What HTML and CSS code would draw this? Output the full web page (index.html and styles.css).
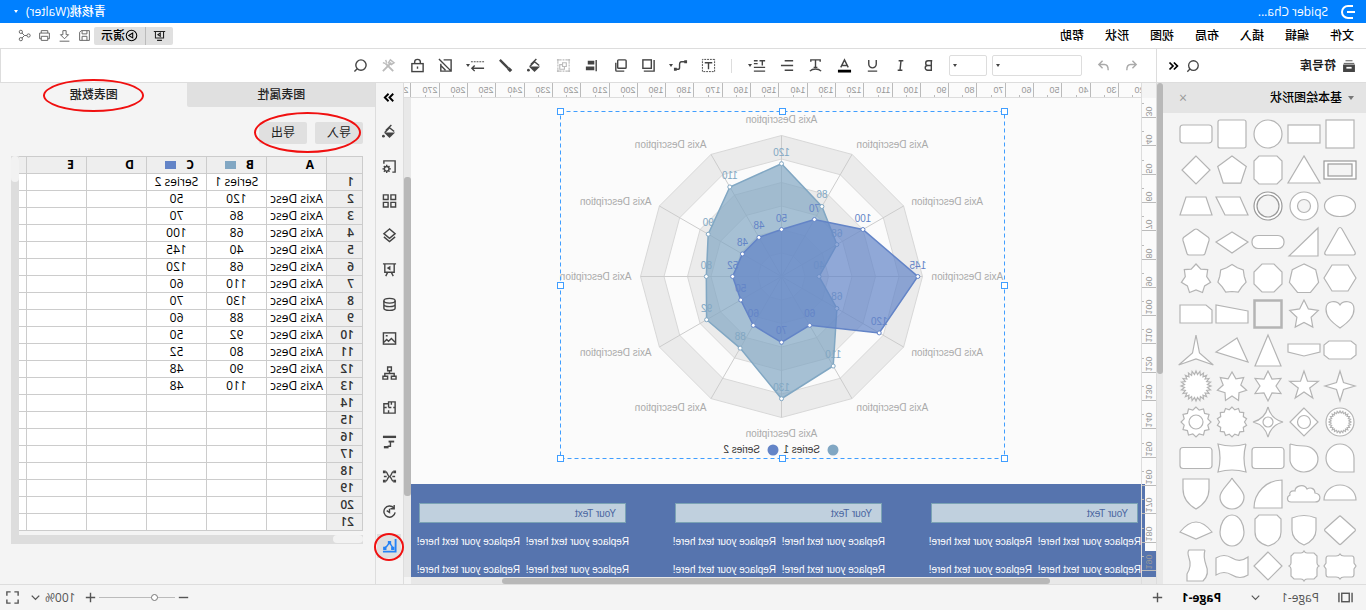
FILE: index.html
```html
<!DOCTYPE html>
<html lang="zh-CN">
<head>
<meta charset="utf-8">
<title>Spider Chart</title>
<link rel="stylesheet" href="styles.css">
</head>
<body>
<svg class="defs" aria-hidden="true">
  <symbol id="i-search" viewBox="0 0 16 16"><circle cx="7.5" cy="7.5" r="5.5"/><path d="M11.500 11.500l3 3"/></symbol>
  <symbol id="i-undo" viewBox="0 0 16 16"><path d="M7 3L3 7l4 4M3 7h6c3 0 4 2 4 6"/></symbol>
  <symbol id="i-redo" viewBox="0 0 16 16"><path d="M9 3l4 4-4 4M13 7H7c-3 0-4 2-4 6"/></symbol>
  <symbol id="i-bold" viewBox="0 0 16 16"><path d="M5 3v10h4a2.5 2.500 0 0 0 0-5H5h3.500a2.500 2.500 0 0 0 0-5H4"/></symbol>
  <symbol id="i-italic" viewBox="0 0 16 16"><path d="M5 3h5M6 13h5M7.500 3l1 10"/></symbol>
  <symbol id="i-under" viewBox="0 0 16 16"><path d="M4 2v4.500a4 4 0 0 0 8 0V2M3 14h10"/></symbol>
  <symbol id="i-color" viewBox="0 0 16 16"><path d="M4 10l4-8 4 8M5.500 8h5"/><path d="M1 14h14" stroke="#000" stroke-width="3"/></symbol>
  <symbol id="i-arc" viewBox="0 0 16 16"><path d="M3 4V2h10v2M8 2v8M6 10h4M2 14c3-3 9-3 12 0"/></symbol>
  <symbol id="i-align" viewBox="0 0 16 16"><path d="M2 3h9M2 8h13M2 13h9"/></symbol>
  <symbol id="i-space" viewBox="0 0 16 16"><path d="M2 3h6M5 3v5M10 3h4M10 6h4M2 10h12M2 14h12"/></symbol>
  <symbol id="i-text" viewBox="0 0 16 16"><rect x="1.500" y="1.500" width="13" height="13" stroke-dasharray="2 1" stroke-width="1"/><path d="M4 5h8M8 5v7"/></symbol>
  <symbol id="i-conn" viewBox="0 0 16 16"><path d="M3 4h4q2 0 2 3v3q0 2 2 2h3"/><path d="M1 4h3M12 12h3" stroke-width="3"/></symbol>
  <symbol id="i-front" viewBox="0 0 16 16"><rect x="5" y="2" width="9" height="9"/><path d="M2 2v12h11"/></symbol>
  <symbol id="i-back" viewBox="0 0 16 16"><rect x="2" y="2" width="9" height="9" rx="1"/><path d="M13 5v8q0 1-1 1H4"/></symbol>
  <symbol id="i-left" viewBox="0 0 16 16"><path d="M3 2v12"/><path d="M5 5h7M5 11h9" stroke-width="4"/></symbol>
  <symbol id="i-group" viewBox="0 0 16 16"><path d="M2 4v8M14 4v8M4 2h8M4 14h8" stroke-dasharray="2 1"/><path d="M1 2h3M2 1v3M12 2h3M14 1v3M1 14h3M2 12v3M12 14h3M14 12v3M5 5h4v4H5zM7 9v3h5V7H9"/></symbol>
  <symbol id="i-fill" viewBox="0 0 16 16"><path d="M6 1l6 6M3 8l5-4 5 5" /><path d="M2 9h12l-6 6z" fill="currentColor" stroke="none"/><circle cx="14.500" cy="13" r="1.500" fill="currentColor" stroke="none"/></symbol>
  <symbol id="i-pen" viewBox="0 0 16 16"><path d="M14 2L5 11" stroke-width="2.500"/><path d="M2 14l3-3" stroke-width="3.500"/></symbol>
  <symbol id="i-arrow" viewBox="0 0 16 16"><path d="M1 4h14" stroke-dasharray="2 1" stroke-width="1"/><path d="M1 11h13M11 8l3 3-3 3"/></symbol>
  <symbol id="i-nofill" viewBox="0 0 16 16"><path d="M10 2H2v12h11V6M15 1L2 14M8 13l5-5"/></symbol>
  <symbol id="i-lock" viewBox="0 0 16 16"><rect x="2" y="6" width="12" height="8.500"/><path d="M5 6V4q0-2.500 3-2.500t3 2.500v2M8 9v2.500"/></symbol>
  <symbol id="i-tools" viewBox="0 0 16 16"><path d="M3 14l8-8M5 5l9 9" stroke-width="2"/><path d="M10 5l1-3M11 6l3-1M2 5l4-3 2 3-3 2z"/></symbol>
  <symbol id="i-collapse" viewBox="0 0 16 16"><path d="M7 4L3 8l4 4M12 4L8 8l4 4"/></symbol>
  <symbol id="i-expand" viewBox="0 0 16 16"><path d="M4 4l4 4-4 4M9 4l4 4-4 4"/></symbol>
  <symbol id="i-library" viewBox="0 0 16 16"><path d="M2 7h12v7H2z" fill="currentColor"/><path d="M2 5h12M4 2h8" stroke-width="1"/><path d="M5 10h6" stroke="#fff" stroke-width="2"/></symbol>
  <symbol id="i-gearbox" viewBox="0 0 16 16"><path d="M2 11V2h12v3M2 11v3h3"/><circle cx="11" cy="10.500" r="2.500"/><path d="M11 6v2M11 13v2M6.500 10.500h2M13.500 10.500h2M8 7.500l1 1M14 7.500l-1 1M8 13.500l1-1M14 13.500l-1-1"/></symbol>
  <symbol id="i-grid" viewBox="0 0 16 16"><path d="M1.500 2h5v5h-5zM9.500 2h5v5h-5zM1.500 10h5v5h-5zM9.500 10h5v5h-5z"/></symbol>
  <symbol id="i-layers" viewBox="0 0 16 16"><path d="M8 1l6 5-6 5-6-5zM2 9.500l6 5 6-5"/></symbol>
  <symbol id="i-board" viewBox="0 0 16 16"><path d="M1 2h14M3 2v9h10V2M6 11l-2 4M10 11l2 4"/><path d="M7 4l4 2.500L7 9z" fill="currentColor" stroke="none"/></symbol>
  <symbol id="i-data" viewBox="0 0 16 16"><ellipse cx="8" cy="4" rx="6" ry="2.500"/><path d="M2 4v8c0 3 12 3 12 0V4M2 8c0 3 12 3 12 0"/></symbol>
  <symbol id="i-image" viewBox="0 0 16 16"><rect x="1.500" y="2" width="13" height="12"/><path d="M2 12l4-4 3 3 2-2 3 3M10 5h2"/></symbol>
  <symbol id="i-org" viewBox="0 0 16 16"><path d="M6 1h4v4H6zM1 11h5v3H1zM10 11h5v3h-5zM8 5v3M3 11V8h10v3"/></symbol>
  <symbol id="i-plan" viewBox="0 0 16 16"><path d="M2 2h7v2h5v10H2zM9 4v4M6 8h3M2 8h2M9 14v-3M11 8h3M6 2v3"/></symbol>
  <symbol id="i-gantt" viewBox="0 0 16 16"><path d="M1 2h14" stroke-width="2.500"/><path d="M3 7h6" stroke-width="2"/><path d="M7 7v5h3"/><path d="M9 13h5" stroke-width="2.500"/></symbol>
  <symbol id="i-mind" viewBox="0 0 16 16"><path d="M1 3h3M12 3h3M1 13h3M12 13h3" stroke-width="3"/><path d="M4 3c2 0 2 5 4 5s2-5 4-5M4 13c2 0 2-5 4-5s2 5 4 5M2 8h3M11 8h3"/></symbol>
  <symbol id="i-history" viewBox="0 0 16 16"><path d="M3.500 4A6 6 0 1 1 2 9M3 1v4h4M8 5v4l3-2"/></symbol>
  <symbol id="i-chart" viewBox="0 0 16 16"><path d="M1.500 1v13.500H15" stroke-width="2"/><path d="M4 11l4-6 3 4 3 2"/><path d="M3.500 10h2v2h-2zM7 4h2v2H7zM12 10h2v2h-2z" fill="currentColor"/></symbol>
  <symbol id="i-slides" viewBox="0 0 16 16"><path d="M1 3h14M3 3v8h10V3M5 14h6M7 5l3 2-3 2z"/></symbol>
  <symbol id="i-play" viewBox="0 0 16 16"><circle cx="8" cy="8" r="6.500"/><path d="M6.500 5l5 3-5 3z"/></symbol>
  <symbol id="i-save" viewBox="0 0 16 16"><path d="M2 2h10l2 2v10H2zM5 2v4h6V2M5 14V9h6v5"/></symbol>
  <symbol id="i-down" viewBox="0 0 16 16"><path d="M6 2h4v5h3l-5 5-5-5h3zM2 15h12"/></symbol>
  <symbol id="i-print" viewBox="0 0 16 16"><path d="M4 5V2h8v3M4 12H2V5h12v7h-2M4 9h8v5H4z"/></symbol>
  <symbol id="i-share" viewBox="0 0 16 16"><circle cx="3" cy="8" r="2"/><circle cx="12.500" cy="3.500" r="2"/><circle cx="12.500" cy="12.500" r="2"/><path d="M5 8h3l3-3M8 8l3 3"/></symbol>
  <symbol id="i-pages" viewBox="0 0 16 16"><rect x="4" y="3.500" width="8" height="9" stroke-width="1.500"/><path d="M1 3v10M15 3v10"/></symbol>
  <symbol id="i-chev" viewBox="0 0 16 16"><path d="M4 6l4 4 4-4"/></symbol>
  <symbol id="i-plus" viewBox="0 0 16 16"><path d="M3 8h10M8 3v10"/></symbol>
  <symbol id="i-minus" viewBox="0 0 16 16"><path d="M3 8h10"/></symbol>
  <symbol id="i-full" viewBox="0 0 16 16"><path d="M2 6V2h4M10 2h4v4M14 10v4h-4M6 14H2v-4"/></symbol>
</svg>

<div class="app">
  <header class="titlebar">
    <svg class="logo" viewBox="0 0 16 16"><path d="M3 2h5a6 6 0 0 1 0 12H3M1 8h8"/></svg>
    <span class="doc">Spider Cha...</span>
    <button class="user">青核桃(Walter)<i class="caret"></i></button>
  </header>

  <nav class="menubar">
    <div class="menus">
      <button>文件</button><button>编辑</button><button>插入</button><button>布局</button><button>视图</button><button>形状</button><button>帮助</button>
    </div>
    <div class="present">
      <button class="present-main"><svg class="icon"><use href="#i-play"/></svg>演示</button><button class="present-alt" aria-label="Slides"><svg class="icon"><use href="#i-slides"/></svg></button>
    </div>
    <div class="file-tools">
      <button aria-label="Save"><svg class="icon thin"><use href="#i-save"/></svg></button>
      <button aria-label="Download"><svg class="icon thin"><use href="#i-down"/></svg></button>
      <button aria-label="Print"><svg class="icon thin"><use href="#i-print"/></svg></button>
      <button aria-label="Share"><svg class="icon thin"><use href="#i-share"/></svg></button>
    </div>
  </nav>

  <div class="toolrow">
    <div class="lib-head">
      <svg class="icon small"><use href="#i-library"/></svg>
      <h2>符号库</h2>
      <button aria-label="Search shapes"><svg class="icon"><use href="#i-search"/></svg></button>
      <button aria-label="Collapse"><svg class="icon strong"><use href="#i-collapse"/></svg></button>
    </div>
    <div class="toolbar">
      <div class="history">
        <button aria-label="Undo"><svg class="icon"><use href="#i-undo"/></svg></button>
        <button aria-label="Redo"><svg class="icon"><use href="#i-redo"/></svg></button>
      </div>
      <div class="pick"><select class="font" aria-label="Font"><option></option></select><i class="caret"></i></div>
      <div class="pick"><select class="size" aria-label="Font size"><option></option></select><i class="caret"></i></div>
      <div class="tools text-tools">
        <button aria-label="Bold"><svg class="icon"><use href="#i-bold"/></svg></button>
        <button aria-label="Italic"><svg class="icon"><use href="#i-italic"/></svg></button>
        <button aria-label="Underline"><svg class="icon"><use href="#i-under"/></svg></button>
        <button aria-label="Colour"><svg class="icon"><use href="#i-color"/></svg></button>
        <button aria-label="Text curve"><svg class="icon"><use href="#i-arc"/></svg></button>
        <button aria-label="Align"><svg class="icon"><use href="#i-align"/></svg></button>
        <button class="drop" aria-label="Spacing"><svg class="icon"><use href="#i-space"/></svg><i class="caret"></i></button>
      </div>
      <div class="rule"></div>
      <div class="tools shape-tools">
        <button aria-label="Text"><svg class="icon"><use href="#i-text"/></svg></button>
        <button class="drop" aria-label="Connector"><svg class="icon"><use href="#i-conn"/></svg><i class="caret"></i></button>
        <button aria-label="Front"><svg class="icon"><use href="#i-front"/></svg></button>
        <button aria-label="Back"><svg class="icon"><use href="#i-back"/></svg></button>
        <button aria-label="Align left"><svg class="icon"><use href="#i-left"/></svg></button>
        <button class="off" aria-label="Group"><svg class="icon thin"><use href="#i-group"/></svg></button>
        <button aria-label="Fill"><svg class="icon"><use href="#i-fill"/></svg></button>
        <button aria-label="Line"><svg class="icon"><use href="#i-pen"/></svg></button>
        <button class="drop" aria-label="Line style"><svg class="icon"><use href="#i-arrow"/></svg><i class="caret"></i></button>
        <button aria-label="Edit shape"><svg class="icon"><use href="#i-nofill"/></svg></button>
        <button aria-label="Lock"><svg class="icon"><use href="#i-lock"/></svg></button>
        <button class="off" aria-label="Tools"><svg class="icon"><use href="#i-tools"/></svg></button>
        <button aria-label="Find"><svg class="icon"><use href="#i-search"/></svg></button>
      </div>
    </div>
  </div>

  <main class="main">
    <aside class="library">
      <div class="lib-body">
        <div class="lib-title"><i class="caret"></i><h3>基本绘图形状</h3><button aria-label="Close">×</button></div>
        <div class="shapes" id="shapes"></div>
      </div>
      <div class="vscroll lib-scroll"><div class="thumb"></div></div>
    </aside>

    <section class="workspace">
      <div class="corner"></div>
      <svg class="hruler" id="hruler"></svg>
      <svg class="vruler" id="vruler"></svg>
      <div class="canvas">
        <div class="chart-frame"><svg id="chart" width="445" height="348" viewBox="0 0 445 348"></svg>
          <div class="handles"><i></i><i></i><i></i><i></i><b></b><i></i><i></i><i></i><i></i></div>
        </div>
        <div class="band">
          <div class="block"><div class="box">Your Text</div><p>Replace your text here!</p><p>Replace your text here!</p><p>Replace your text here!</p><p>Replace your text here!</p></div>
          <div class="block"><div class="box">Your Text</div><p>Replace your text here!</p><p>Replace your text here!</p><p>Replace your text here!</p><p>Replace your text here!</p></div>
          <div class="block"><div class="box">Your Text</div><p>Replace your text here!</p><p>Replace your text here!</p><p>Replace your text here!</p><p>Replace your text here!</p></div>
        </div>
      </div>
      <div class="vscroll work-v"><div class="thumb"></div></div>
      <div class="hscroll work-h"><div class="thumb"></div></div>
    </section>

    <nav class="rail">
      <button aria-label="Expand"><svg class="icon strong"><use href="#i-expand"/></svg></button>
      <button aria-label="Fill"><svg class="icon"><use href="#i-fill"/></svg></button>
      <button aria-label="Page setup"><svg class="icon"><use href="#i-gearbox"/></svg></button>
      <button aria-label="Components"><svg class="icon"><use href="#i-grid"/></svg></button>
      <button aria-label="Layers"><svg class="icon"><use href="#i-layers"/></svg></button>
      <button aria-label="Presentation"><svg class="icon"><use href="#i-board"/></svg></button>
      <button aria-label="Data"><svg class="icon"><use href="#i-data"/></svg></button>
      <button aria-label="Image"><svg class="icon"><use href="#i-image"/></svg></button>
      <button aria-label="Org chart"><svg class="icon"><use href="#i-org"/></svg></button>
      <button aria-label="Floor plan"><svg class="icon"><use href="#i-plan"/></svg></button>
      <button aria-label="Gantt"><svg class="icon"><use href="#i-gantt"/></svg></button>
      <button aria-label="Mind map"><svg class="icon"><use href="#i-mind"/></svg></button>
      <button aria-label="History"><svg class="icon"><use href="#i-history"/></svg></button>
      <button class="active" aria-label="Chart"><svg class="icon"><use href="#i-chart"/></svg><span class="mark mark-rail"></span></button>
    </nav>

    <aside class="panel">
      <div class="tabs"><button class="tab">图表属性</button><button class="tab current">图表数据<span class="mark mark-tab"></span></button></div>
      <div class="actions"><button>导入</button><button>导出</button><span class="mark mark-actions"></span></div>
      <div class="sheet">
        <div class="sheet-view">
          <table>
            <colgroup><col class="c-num"><col class="c"><col class="c"><col class="c"><col class="c"><col class="c"><col class="c-rest"></colgroup>
            <thead><tr><th></th><th>A</th><th>B<i class="swatch s1"></i></th><th>C<i class="swatch s2"></i></th><th>D</th><th>E</th><th></th></tr></thead>
            <tbody id="rows"></tbody>
          </table>
        </div>
        <div class="sheet-v"><div class="thumb"></div></div>
        <div class="sheet-h"><div class="thumb"></div></div>
      </div>
    </aside>
  </main>

  <footer class="status">
    <svg class="icon"><use href="#i-pages"/></svg>
    <button class="page-pick">Page-1<svg class="icon thin"><use href="#i-chev"/></svg></button>
    <button class="page-tab">Page-1</button>
    <button aria-label="Add page"><svg class="icon"><use href="#i-plus"/></svg></button>
    <div class="zoom">
      <button aria-label="Zoom out"><svg class="icon"><use href="#i-minus"/></svg></button>
      <input type="range" min="0" max="100" value="24" aria-label="Zoom">
      <button aria-label="Zoom in"><svg class="icon"><use href="#i-plus"/></svg></button>
      <button class="level">100%<svg class="icon"><use href="#i-chev"/></svg></button>
      <button aria-label="Full screen"><svg class="icon"><use href="#i-full"/></svg></button>
    </div>
  </footer>
</div>
<script src="app.js"></script>
</body>
</html>
```
FILE: styles.css
```css
* { box-sizing: border-box; }
body {
  margin: 0;
  font: 12px/16px "Open Sans", "Noto Sans CJK SC", sans-serif;
  color: #222;
  overflow: hidden;
}
button {
  margin: 0; padding: 0; border: 0; background: none;
  font: inherit; color: inherit;
  display: flex; align-items: center; justify-content: center;
}
h2, h3, p { margin: 0; font-size: 12px; font-weight: 500; }
i { font-style: normal; }
.defs { position: absolute; width: 0; height: 0; }
.icon {
  width: 15px; height: 15px; flex: none;
  fill: none; stroke: currentColor; stroke-width: 1.5;
}
.icon.small { width: 13px; height: 13px; }
.icon.thin { stroke-width: 1.2; }
.icon.strong { color: #000; stroke-width: 2; }
.caret {
  flex: none; width: 0; height: 0;
  border: 2px solid transparent; border-top: 3px solid currentColor; border-bottom: 0;
}
/* The whole interface is shown flipped left to right. */
.app {
  height: 100vh;
  display: flex; flex-direction: column;
  transform: scaleX(-1);
  background: #f4f4f4;
}

.titlebar {
  flex: none; height: 23px; padding: 0 14px 0 10px;
  display: flex; align-items: center;
  background: #0080ff; color: #fff;
}
.logo { width: 16px; height: 16px; fill: none; stroke: #fff; stroke-width: 2; }
.doc { margin-left: 12px; font-weight: 500; }
.user { margin-left: auto; gap: 8px; font-weight: 500; }

.menubar {
  flex: none; height: 26px; padding: 0 18px 0 12px;
  display: flex; align-items: center;
  background: #fff; border-bottom: 1px solid #ddd;
}
.menus { display: flex; gap: 21px; font-weight: 500; color: #000; }
.present { margin-left: auto; display: flex; flex-direction: row-reverse; height: 18px; border-radius: 2px; background: #e0e0e0; overflow: hidden; }
.present-main { width: 51px; font-weight: 500; color: #000; }
.present-alt { width: 28px; border-right: 1px solid #bbb; }
.present .icon { width: 13px; height: 13px; stroke-width: 1.3; }
.file-tools { margin-left: 3px; display: flex; gap: 7px; color: #666; }
.file-tools .icon { width: 13px; height: 13px; }

.toolrow { flex: none; height: 34px; display: flex; background: #fff; border-bottom: 1px solid #ddd; }
.lib-head {
  width: 210px; flex: none; padding: 0 6px 0 10px;
  display: flex; align-items: center; border-right: 1px solid #ddd; color: #444;
}
.lib-head h2 { margin: 0 auto 0 6px; font-weight: 700; color: #222; }
.lib-head button { width: 20px; }
.lib-head .icon { width: 14px; height: 14px; }
.toolbar { flex: 1; display: flex; align-items: center; padding-left: 15px; color: #444; border-right: 1px solid #ddd; }
.history { display: flex; gap: 10px; color: #aaa; }
.history button { width: 18px; }
.pick { position: relative; margin-left: 5px; }
.history + .pick { margin-left: 13px; }
.pick select {
  display: block; height: 21px; appearance: none;
  background: #fff; border: 1px solid #ddd; border-radius: 2px;
}
.pick .caret { position: absolute; right: 4px; top: 9px; }
.font { width: 90px; }
.size { width: 38px; }
.tools { display: flex; justify-content: space-between; }
.tools button { width: 20px; height: 20px; }
.tools .drop { width: 23px; }
.text-tools { width: 193px; margin-left: 10px; }
.rule { width: 1px; height: 14px; margin: 0 12px 0 14px; background: #ddd; }
.shape-tools { width: 369px; }
.off { color: #bbb; }

.main { flex: 1; min-height: 0; display: flex; }
.library { width: 210px; flex: none; display: flex; border-right: 1px solid #ddd; overflow: hidden; }
.lib-body { flex: 1; }
.lib-title {
  height: 30px; padding: 0 16px 0 12px; margin-bottom: 3px;
  display: flex; align-items: center; gap: 6px; background: #e4e4e4;
}
.lib-title h3 { color: #000; }
.lib-title .caret { color: #777; border-width: 3px; border-top-width: 4px; border-bottom: 0; }
.lib-title button { margin-left: auto; color: #999; font-size: 14px; }
.shapes { display: grid; grid-template-columns: repeat(5, 36px); padding-left: 8px; }
.shapes svg { display: block; width: 36px; height: 36px; fill: #fff; stroke: #b4b4b4; stroke-width: 1.2; }
.vscroll, .hscroll { background: #e8e8e8; }
.vscroll .thumb, .hscroll .thumb { background: #b8b8b8; border-radius: 3px; }
.lib-scroll { width: 6px; }
.lib-scroll .thumb { height: 58%; }

.workspace {
  flex: 1; min-width: 0;
  display: grid; grid-template: 15px minmax(0, 1fr) 7px / 15px minmax(0, 1fr) 7px;
}
.corner { background: #f4f4f4; border-right: 1px solid #ddd; }
.hruler { grid-column: 2 / 4; width: 100%; height: 15px; background: #fbfbfb; border-bottom: 1px solid #ddd; }
.vruler { grid-row: 2 / 4; grid-column: 1; width: 15px; height: 100%; background: #fbfbfb; border-right: 1px solid #ddd; }
.hruler line, .vruler line { stroke: #bbb; }
.hruler text, .vruler text { font: 9px "Liberation Sans", sans-serif; fill: #999; }
.canvas { position: relative; overflow: hidden; background: #fbfbfb; grid-area: 2 / 2; }
.work-v { grid-area: 2 / 3; padding-top: 79px; }
.work-v .thumb { height: 319px; }
.work-h { grid-area: 3 / 2; padding: 1px 12.5%; }
.work-h .thumb { height: 6px; }

.chart-frame { position: absolute; left: 136px; top: 13px; width: 445px; height: 348px; }
#chart { display: block; overflow: visible; }
#chart text { font: 10px "Liberation Sans", sans-serif; }
.handles {
  position: absolute; inset: -3px; display: grid;
  grid-template-columns: repeat(3, 7px); justify-content: space-between; align-content: space-between;
}
.handles i { width: 7px; height: 7px; background: #fff; border: 1px solid #409eff; }
.band {
  position: absolute; left: 0; right: 0; top: 386px; bottom: 0;
  display: flex; gap: 49px; padding: 19px 0 0 3px; background: #5674ae;
}
.block { flex: none; width: 207px; display: grid; grid-template-columns: 109px 109px; grid-template-rows: 20px 18px 28px; align-content: start; }
.box {
  width: 207px; grid-column: span 2; padding: 0 9px; border: 1px solid #7ba3b5; background: #c0d0de;
  font: 10px/19px "Liberation Sans", sans-serif; color: #4a66a0;
}
.block p { margin-left: -3px; padding-top: 12px; font: 10px/14px "Liberation Sans", sans-serif; color: #fff; white-space: nowrap; }
.block p:nth-of-type(n+3) { padding-top: 22px; }

.rail {
  width: 29px; flex: none; padding: 2px 0 26px;
  display: flex; flex-direction: column; justify-content: space-between; align-items: center;
  color: #444; border-right: 1px solid #ddd; border-left: 1px solid #ddd;
}
.rail button { position: relative; width: 24px; height: 24px; }
.rail .active { background: #dfdfdf; color: #2583f5; }
.mark { position: absolute; border: 2px solid #f01010; border-radius: 50%; pointer-events: none; z-index: 2; }
.mark-rail { inset: -1px -3px -3px -3px; }

.panel { width: 375px; flex: none; }
.tabs { display: flex; }
.tab { position: relative; width: 188px; height: 24px; background: #e0e0e0; border-radius: 0 0 2px 0; font-weight: 500; }
.tab.current { background: none; }
.mark-tab { inset: -4px 43px -5px; }
.actions { position: relative; display: flex; gap: 8px; margin: 15px 0 12px 12px; width: 104px; }
.actions button { width: 48px; height: 22px; border-radius: 2px; background: #e0e0e0; }
.mark-actions { inset: -10px -5px -9px 2px; }
.sheet {
  margin: 0 11px 0 12px;
  display: grid; grid-template: auto 9px / minmax(0, 1fr) 8px;
  background: #ddd;
}
.sheet-view { overflow: hidden; background: #f4f4f4; padding-bottom: 4px; }
table { width: 344px; table-layout: fixed; border-collapse: collapse; line-height: 16px; color: #000; }
.c-num { width: 36px; }
.c { width: 60px; }
.c-rest { width: 8px; }
th, td { height: 17px; padding: 0; border: 1px solid #ccc; text-align: center; white-space: nowrap; overflow: hidden; background: #fff; }
th { background: #eee; text-align: left; padding-left: 12px; font-weight: 700; }
th:first-child { padding-left: 8px; font-weight: 600; color: #333; }
th:last-child { padding: 0; }
td.name { text-align: left; padding-left: 3px; }
.swatch { display: inline-block; width: 11px; height: 8px; margin-left: 10px; }
.s1 { background: #81a7c3; }
.s2 { background: #6384c7; }
.sheet-v .thumb { height: 26px; border-radius: 4px; background: #f2f2f2; }
.sheet-h { grid-column: 1 / 3; }
.sheet-h .thumb { width: 30px; height: 8px; border-radius: 4px; background: #f2f2f2; }

.status {
  flex: none; height: 26px; padding: 0 5px 0 13px;
  display: flex; align-items: center; border-top: 1px solid #ddd; color: #555;
}
.page-pick { margin-left: 19px; gap: 18px; }
.page-tab { margin: 0 17px 0 27px; font-weight: 700; color: #000; }
.zoom { margin-left: auto; display: flex; align-items: center; }
.zoom input { appearance: none; width: 76px; height: 15px; margin: 0 1px; background: linear-gradient(#bbb, #bbb) center / 100% 1px no-repeat; }
.zoom input::-webkit-slider-thumb { appearance: none; width: 7px; height: 7px; border: 1px solid #777; border-radius: 50%; background: #fff; }
.level { margin: 0 8px 0 7px; gap: 2px; }
```
FILE: app.js
```javascript
const $ = id => document.getElementById(id);

/* Spreadsheet and chart data */
const s1 = [120, 86, 68, 40, 68, 110, 130, 88, 92, 80, 90, 110];
const s2 = [50, 70, 100, 145, 120, 60, 70, 60, 50, 52, 48, 48];

let rows = '';
for (let r = 1; r <= 21; r++) {
  let a = '', b = '', c = '';
  if (r === 1) { b = 'Series 1'; c = 'Series 2'; }
  else if (r <= 13) { a = 'Axis Desc'; b = s1[r - 2]; c = s2[r - 2]; }
  rows += `<tr><th>${r}</th><td class="name">${a}</td><td>${b}</td><td>${c}</td><td></td><td></td><td></td></tr>`;
}
$('rows').innerHTML = rows;

/* Rulers */
const step = 28.3;
let h = '', v = '';
for (let n = 20; n <= 280; n += 10) {
  const x = Math.round(22 + (n - 30) / 10 * step) + 0.5;
  h += `<line x1="${x}" x2="${x}" y1="0" y2="15"/><line x1="${x + 14}" x2="${x + 14}" y1="12" y2="15"/><text x="${x + 2}" y="10">${n}</text>`;
}
v += '<rect x="11" y="386" width="4" height="67" fill="#5674ae"/><rect x="0" y="453" width="15" height="26" fill="#5674ae"/>';
for (let n = 30; n <= 190; n += 10) {
  const y = Math.round(19 + (n - 30) / 10 * step) + 0.5;
  v += `<line x1="0" x2="15" y1="${y}" y2="${y}"/><line x1="12" x2="15" y1="${y - 14}" y2="${y - 14}"/><text transform="translate(10 ${y - 1}) rotate(-90)">${n}</text>`;
}
v += '<rect x="0" y="479" width="15" height="9" fill="#e8e8e8"/>';
$('hruler').innerHTML = h;
$('vruler').innerHTML = v;

/* Radar chart */
const cx = 223.5, cy = 165.5, R = 141;
const pt = (k, r) => [cx - r * Math.sin(k * Math.PI / 6), cy - r * Math.cos(k * Math.PI / 6)];
const ring = f => Array.from({ length: 12 }, (_, k) => pt(k, f(k)).map(n => n.toFixed(1)).join()).join(' ');
let g = '';
for (let i = 6; i > 0; i--) {
  g += `<polygon points="${ring(() => R * i / 6)}" fill="${i % 2 ? '#fbfbfb' : '#ebebeb'}" stroke="#d8d8d8"/>`;
}
for (let k = 0; k < 12; k++) {
  const [x, y] = pt(k, R);
  g += `<line x1="${cx}" y1="${cy}" x2="${x}" y2="${y}" stroke="#ccc"/>`;
}
const labelShift = [-4, 1, 3, 3, 4, 5, 10, 5, 4, 3, 3, 1];
for (let k = 0; k < 12; k++) {
  const [x, y] = pt(k, 150);
  const side = k % 6 === 0 ? 'middle' : k < 6 ? 'end' : 'start';
  g += `<text x="${x}" y="${y + labelShift[k]}" text-anchor="${side}" fill="#aaa">Axis Description</text>`;
}
for (const [data, col] of [[s1, '#81a7c3'], [s2, '#6384c7']]) {
  const tag = data.map((d, k) => {
    const [x, y] = pt(k, d / 150 * R);
    return `<circle cx="${x}" cy="${y}" r="2" fill="#fff" stroke="${col}"/><text x="${x}" y="${y - 8}" text-anchor="middle" fill="${col}">${d}</text>`;
  }).join('');
  g += `<polygon points="${ring(k => data[k] / 150 * R)}" fill="${col}" fill-opacity=".7" stroke="${col}" stroke-width="1.5"/>${tag}`;
}
g += `<circle cx="172" cy="339" r="5.5" fill="#81a7c3"/><text x="185" y="342" fill="#333">Series 1</text>
<circle cx="232" cy="339" r="5.5" fill="#6384c7"/><text x="245" y="342" fill="#333">Series 2</text>
<rect x=".5" y=".5" width="444" height="347" fill="none" stroke="#409eff" stroke-dasharray="4 3"/>`;
$('chart').innerHTML = g;

/* Shape library: each entry is drawn in a 36 x 36 cell */
const P = d => `<path d="${d}"/>`;
const G = s => `<polygon points="${s}"/>`;
const C = (r, x = '') => `<circle cx="18" cy="18" r="${r}" ${x}/>`;
const B = (w, hh, r = 0, x = '') => `<rect x="${18 - w / 2}" y="${18 - hh / 2}" width="${w}" height="${hh}" rx="${r}" ${x}/>`;
const star = (n, ro, ri, c = 18) => {
  const a = [];
  for (let i = 0; i < n * 2; i++) {
    const r = i % 2 ? ri : ro, t = i * Math.PI / n;
    a.push((18 + r * Math.sin(t)).toFixed(1) + ',' + (c - r * Math.cos(t)).toFixed(1));
  }
  return G(a.join(' '));
};
const reg = (n, r, c = 18) => star(n, r, r * Math.cos(Math.PI / n), c);
const dark = 'stroke="#999"';
const shapes = [
  B(28, 28), B(32, 18), C(14), B(28, 28, 2), B(32, 18, 3),
  B(32, 18, 0, dark) + B(24, 12, 0, 'fill="#f4f4f4" ' + dark), G('18,4 34,31 2,31'), G('9,4 27,4 32,9 32,27 27,32 9,32 4,27 4,9'), reg(5, 15, 19), G('18,4 32,18 18,32 4,18'),
  '<ellipse cx="18" cy="18" rx="15.5" ry="10.5"/>', C(14) + C(6.5, 'fill="#f4f4f4"'), C(14, dark) + C(11, 'fill="#f4f4f4" ' + dark), G('10,9 34,9 25,27 2,27'), G('8,9 28,9 34,27 2,27'),
  P('M16 5q2-3 4 0l13 23q1 2-1 3H4q-2-1-1-3z'), G('4,4 4,32 33,32'), B(32, 13, 6), G('18,8 34,18 18,29 2,18'), P('M16.5 5.5q1.5-1 3 0l11 8q1 1 .5 3l-4 13q-.5 1.5-2 1.5H11q-1.500 0-2-1.500l-4-13q-.5-2 .5-3z'),
  G('10,5 26,5 34,18 26,31 10,31 2,18'), reg(7, 15, 19), G('12,4 24,4 32,12 32,24 24,32 12,32 4,24 4,12'), star(7, 14.5, 12.5, 19), star(7, 15, 11, 19),
  P('M18 32C8 25 4 20 4 13C4 4 15 4 18 9C21 4 32 4 32 13C32 20 28 25 18 32z'), star(5, 15, 7.5, 19), B(27, 27, 0, 'fill="#f4f4f4" stroke-width="2.5"'), G('2,15 34,9 34,27 2,27'), G('8,9 34,9 34,27 2,27 2,14'),
  G('7,9 29,9 34,13 34,23 29,27 7,27 2,23 2,13'), G('2,12 34,12 34,20 18,24 2,20'), G('18,3 31,34 5,34'), G('13,6 34,20 2,30'), star(3, 20, 4, 23),
  star(4, 15, 5), star(5, 15, 6), star(6, 15, 8), star(7, 15, 9, 19), star(24, 15, 11.5),
  C(14) + star(24, 11, 9), G('18,4 32,18 18,32 4,18') + C(6.5), P('M18 3q3 12 15 15q-12 3-15 15q-3-12-15-15q12-3 15-15') + C(5), star(14, 15, 12.5), star(12, 15, 12.2) + C(7),
  P('M18 4A14 14 0 1 1 18 32H4V18A14 14 0 0 1 18 4z'), P('M32 4v14A14 13 0 1 1 18 6q8 0 14-2'), B(32, 21, 3), P('M4 4q14 4 28 0q-4 14 0 28q-14-4-28 0q4-14 0-28'), B(32, 21, 3),
  P('M2 24a16 15 0 0 1 32 0z'), P('M7 26c-6 0-7-8 0-9c0-5 5-6 8-4c3-6 12-3 12 2c4-1 6 2 5 4c4 2 3 7-1 7z'), P('M4 4a28 28 0 0 1 28 28H4z'), P('M18 2c3 6 12 12 12 19a12 12 0 0 1-24 0c0-7 9-13 12-19'), P('M5 3h26v10c0 10-6 16-13 20C11 29 5 23 5 13z'),
  P('M17 4.5q1-1 2 0L33 17q1 1 0 2L19 32q-1 1-2 0L3 19q-1-1 0-2z'), P('M6 6q12-5 24 0v12c0 7-5 12-12 15C11 30 6 25 6 18z'), P('M9 3h18l4 4v13c0 8-6 12-13 14C11 32 5 28 5 20V7z'), P('M18 3c8 0 12 10 12 17s-5 14-12 14S6 27 6 20S10 3 18 3'), P('M2 20q16-20 32 0l-16 7z'),
  P('M6 8h8q3 0 4-2q1 2 4 2h8q2 0 2 3v4l2 3l-2 3v5q0 3-2 3h-8q-3 0-4 2q-1-2-4-2H6q-2 0-2-3v-5l-2-3l2-3v-4q0-3 2-3'), P('M8 5h7q2 0 3-2q1 2 3 2h7l3 3v7q0 2 2 3q-2 1-2 3v7l-3 3h-7q-2 0-3 2q-1-2-3-2H8l-3-3v-7q0-2-2-3q2-1 2-3V8z'), G('18,4 32,18 18,32 4,18'), P('M2 9q8 6 16 1q8-5 16 0v17q-8-5-16 0q-8 5-16 0z'), P('M9 2h16q2 2 0 8q-3 8 2 16v7H11q-7-7-3-16q3-9 1-15')
];
$('shapes').innerHTML = shapes.map(s => `<svg viewBox="0 0 36 36">${s}</svg>`).join('');
```
